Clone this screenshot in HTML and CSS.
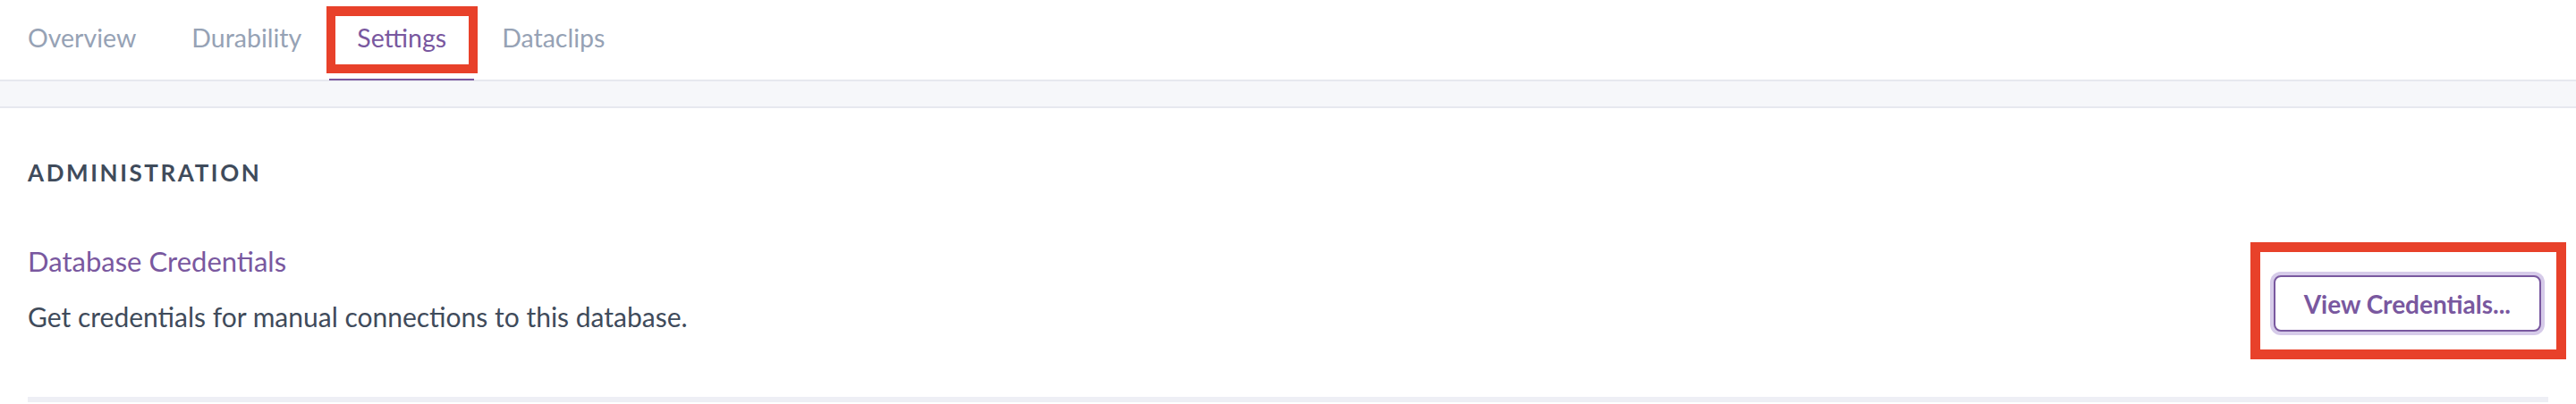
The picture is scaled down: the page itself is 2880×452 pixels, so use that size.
FILE: index.html
```html
<!DOCTYPE html>
<html lang="en">
<head>
<meta charset="utf-8">
<title>Settings</title>
<link rel="stylesheet" href="styles.css">
</head>
<body>
  <nav class="tabs">
    <a class="tab">Overview</a>
    <a class="tab">Durability</a>
    <a class="tab tab-active">Settings<span class="callout callout-tab"></span></a>
    <a class="tab">Dataclips</a>
  </nav>
  <div class="band"></div>
  <section class="section">
    <h2 class="section-title">ADMINISTRATION</h2>
    <div class="row">
      <div class="row-text">
        <div class="row-title">Database Credentials</div>
        <div class="row-desc">Get credentials for manual connections to this database.</div>
      </div>
      <div class="row-action">
        <button class="btn">View Credentials...</button>
        <span class="callout callout-btn"></span>
      </div>
    </div>
  </section>
</body>
</html>
```
FILE: styles.css
```css
* { box-sizing: border-box; }
html, body { margin: 0; padding: 0; background: #fff; }
body {
  font-family: Lato, "Noto Sans", sans-serif;
  color: #3f4b5b;
  overflow: hidden;
}
.tabs {
  display: flex;
  height: 91px;
  border-bottom: 2px solid #e7e8ef;
}
.tab {
  position: relative;
  display: block;
  padding: 0 31px 4px;
  font-size: 28.5px;
  line-height: 85px;
  color: #96a2b5;
}
.tab-active { color: #79589f; }
.tab-active::after {
  content: "";
  position: absolute;
  left: 0;
  right: 0;
  bottom: -1px;
  height: 2px;
  background: #79589f;
}
.callout {
  position: absolute;
  border: 10px solid #e8412a;
  pointer-events: none;
}
.callout-tab {
  left: -3px;
  right: -4px;
  top: 7px;
  height: 75px;
  border-top-width: 11px;
}
.band {
  height: 30px;
  background: #f6f7fa;
  border-bottom: 2px solid #e7e8ef;
}
.section {
  padding: 0 31px;
}
.section-title {
  margin: 57px 0 0;
  font-size: 26px;
  line-height: 31px;
  font-weight: 700;
  letter-spacing: 0.1em;
  color: #3f4b5b;
}
.row {
  display: flex;
  justify-content: space-between;
  align-items: flex-end;
  padding: 65px 8px 73px 0;
  border-bottom: 6px solid #eeeff5;
}
.row-title {
  font-size: 31px;
  line-height: 36px;
  color: #79589f;
}
.row-desc {
  margin-top: 27px;
  font-size: 30px;
  line-height: 34px;
  color: #3f4b5b;
}
.row-action {
  position: relative;
}
.btn {
  display: block;
  height: 63px;
  padding: 0 32px;
  font-family: Lato, "Noto Sans", sans-serif;
  font-size: 28px;
  font-weight: 700;
  color: #79589f;
  background: #fff;
  border: 2px solid #79589f;
  border-radius: 8px;
  box-shadow: 0 0 0 4px #d6cbe9;
}
.callout-btn {
  left: -26px;
  right: -28px;
  top: -37px;
  bottom: -31px;
  border-width: 11px;
}
```
